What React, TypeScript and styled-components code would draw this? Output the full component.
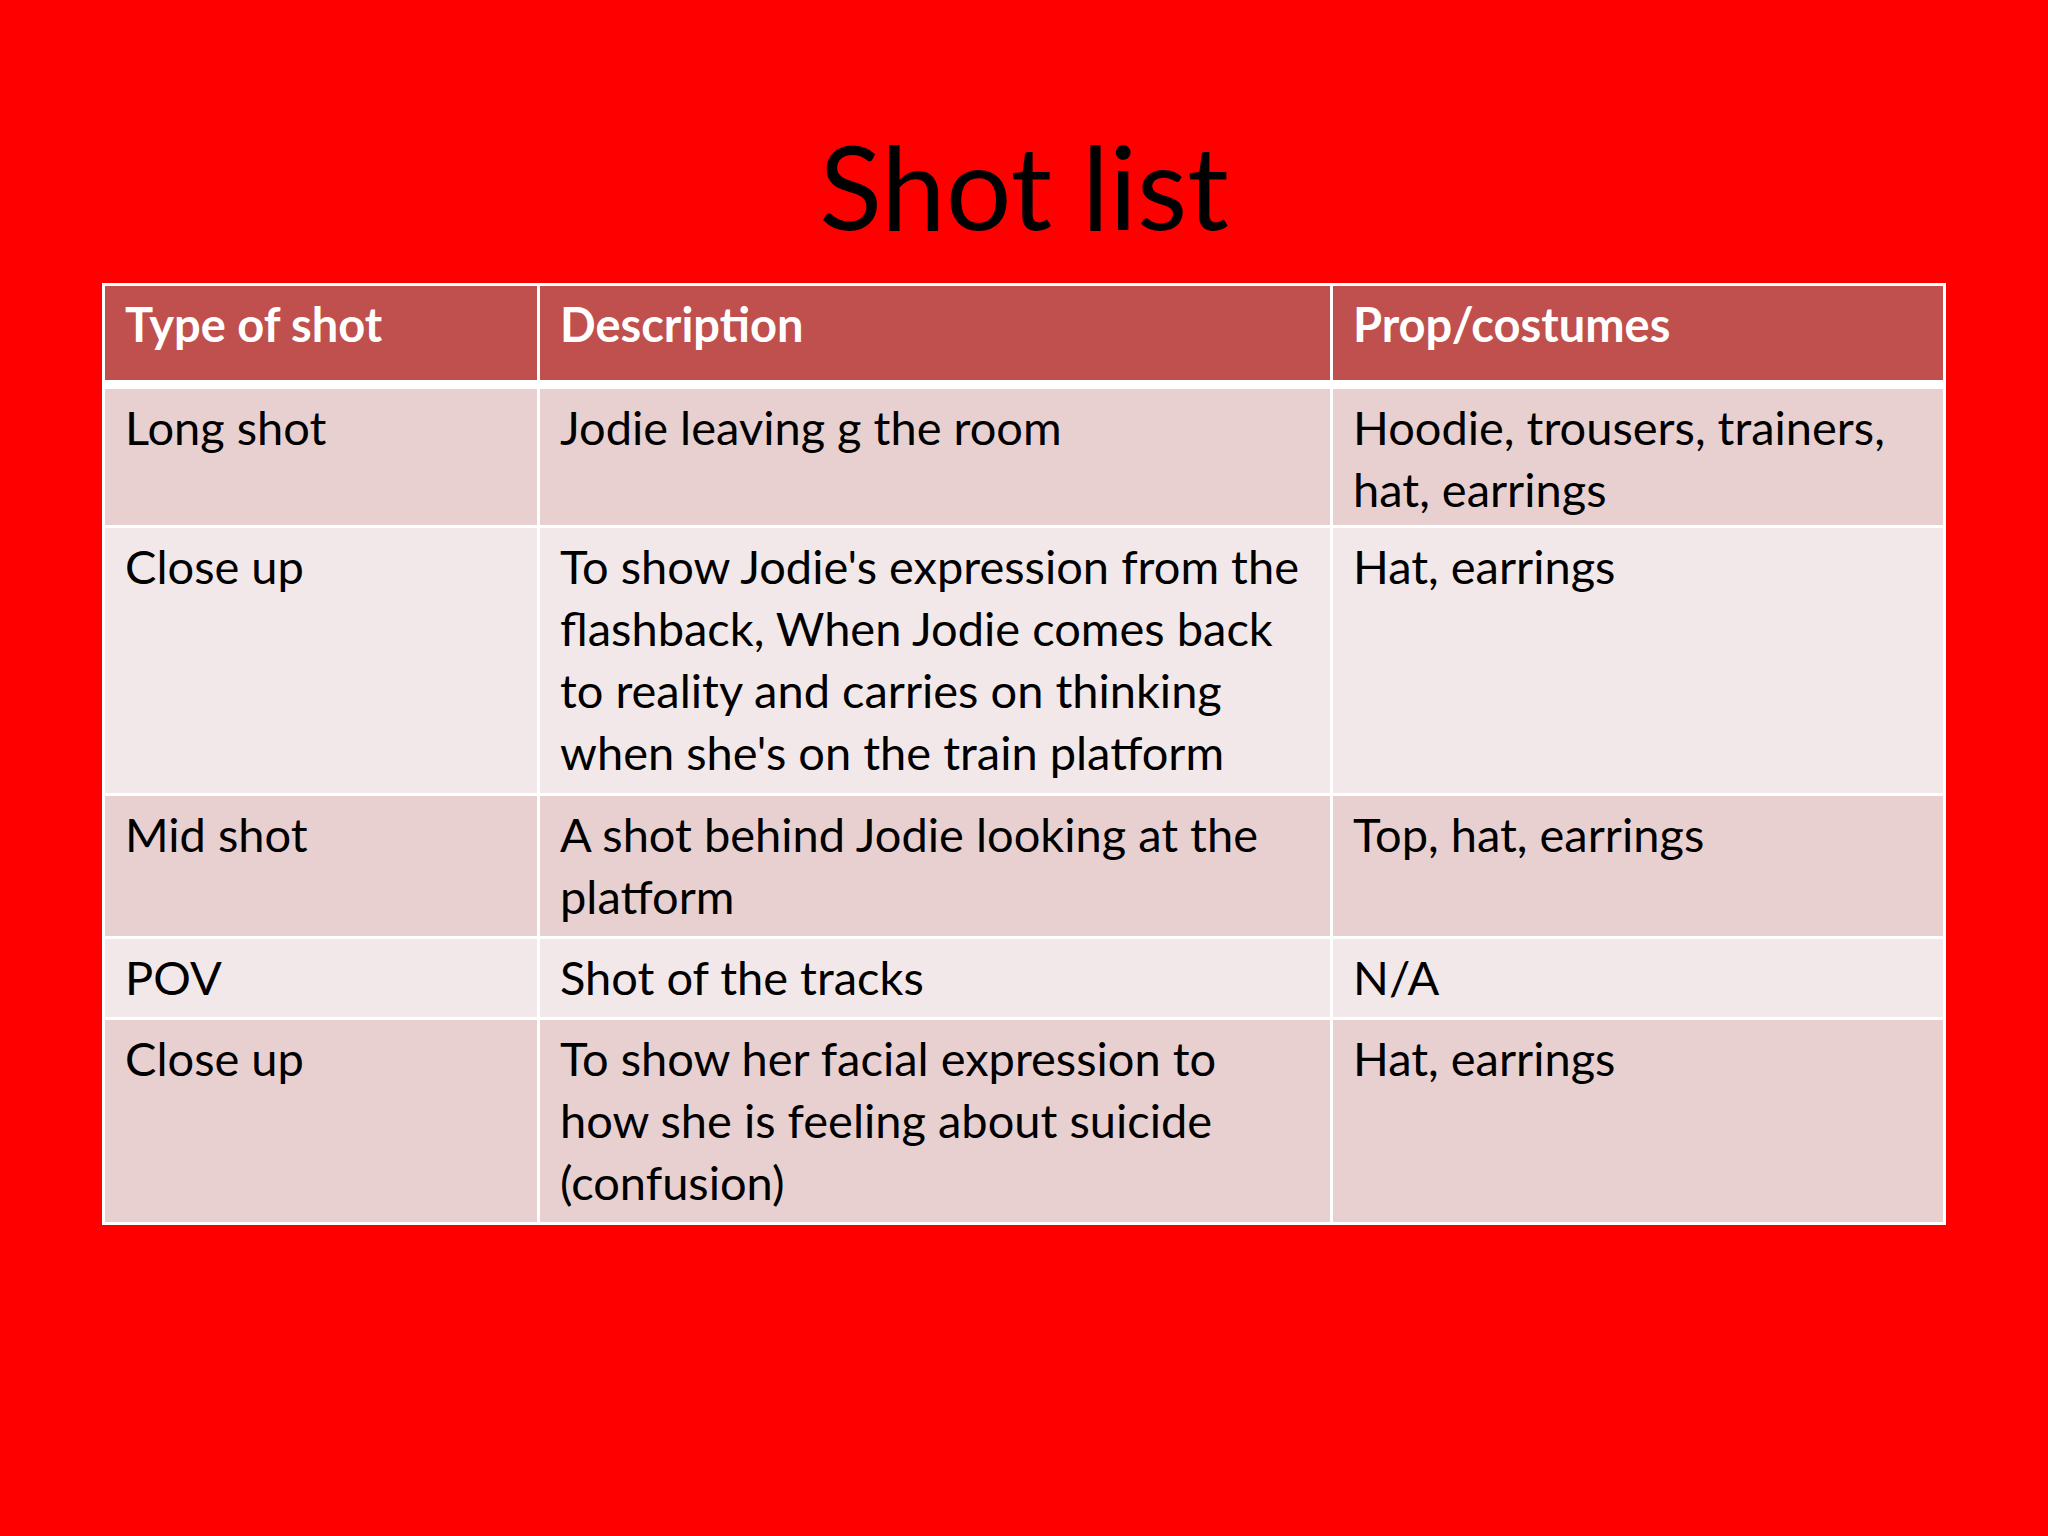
import styled, { createGlobalStyle } from "styled-components";

const GlobalStyle = createGlobalStyle`
  html, body {
    margin: 0;
    padding: 0;
    background: #ff0000;
  }
`;

const Page = styled.div`
  width: 2048px;
  min-height: 1536px;
  background: #ff0000;
  display: flex;
  flex-direction: column;
  align-items: center;
  font-family: Lato, "Open Sans", sans-serif;
`;

const Title = styled.h1`
  margin: 128px 0 39px;
  font-size: 116px;
  line-height: 116px;
  font-weight: 400;
  color: #000;
`;

const Table = styled.div<{ $rows: string }>`
  display: grid;
  grid-template-columns: 432px 790px 610px;
  grid-template-rows: ${(props) => props.$rows};
  gap: 3px;
  padding: 3px;
  background: #ffffff;
`;

const HeadCell = styled.div`
  box-sizing: border-box;
  background: #c0504d;
  border-bottom: 6px solid #ffffff;
  padding: 7px 20px 0;
  font-size: 47px;
  line-height: 62px;
  font-weight: 700;
  color: #ffffff;
`;

const Cell = styled.div<{ $band: "dark" | "light" }>`
  background: ${(props) => (props.$band === "dark" ? "#e8d0d1" : "#f3e8e9")};
  padding: 7px 20px 0;
  font-size: 47px;
  line-height: 62px;
  color: #000;
  white-space: nowrap;
`;

interface Shot {
  type: string;
  description: string[];
  props: string[];
  height: number;
}

const shots: Shot[] = [
  {
    type: "Long shot",
    description: ["Jodie leaving g the room"],
    props: ["Hoodie, trousers, trainers,", "hat, earrings"],
    height: 136,
  },
  {
    type: "Close up",
    description: [
      "To show Jodie's expression from the",
      "flashback, When Jodie comes back",
      "to reality and carries on thinking",
      "when she's on the train platform",
    ],
    props: ["Hat, earrings"],
    height: 265,
  },
  {
    type: "Mid shot",
    description: ["A shot behind Jodie looking at the", "platform"],
    props: ["Top, hat, earrings"],
    height: 140,
  },
  {
    type: "POV",
    description: ["Shot of the tracks"],
    props: ["N/A"],
    height: 78,
  },
  {
    type: "Close up",
    description: [
      "To show her facial expression to",
      "how she is feeling about suicide",
      "(confusion)",
    ],
    props: ["Hat, earrings"],
    height: 202,
  },
];

function Lines({ lines }: { lines: string[] }) {
  return (
    <>
      {lines.map((line, i) => (
        <div key={i}>{line}</div>
      ))}
    </>
  );
}

function App() {
  const rows = ["100px", ...shots.map((s) => `${s.height}px`)].join(" ");

  return (
    <Page>
      <GlobalStyle />
      <Title>Shot list</Title>
      <Table $rows={rows}>
        <HeadCell>Type of shot</HeadCell>
        <HeadCell>Description</HeadCell>
        <HeadCell>Prop/costumes</HeadCell>
        {shots.map((shot, i) => {
          const band = i % 2 === 0 ? "dark" : "light";
          return [
            <Cell key={`t${i}`} $band={band}>
              {shot.type}
            </Cell>,
            <Cell key={`d${i}`} $band={band}>
              <Lines lines={shot.description} />
            </Cell>,
            <Cell key={`p${i}`} $band={band}>
              <Lines lines={shot.props} />
            </Cell>,
          ];
        })}
      </Table>
    </Page>
  );
}

export default App;
